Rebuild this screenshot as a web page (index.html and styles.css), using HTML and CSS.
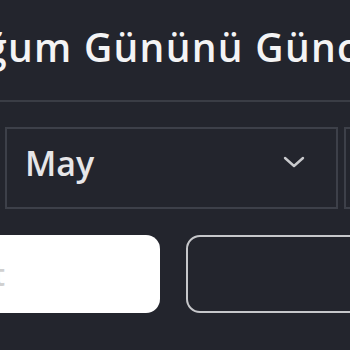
FILE: index.html
```html
<!DOCTYPE html>
<html lang="tr">
<head>
<meta charset="utf-8">
<link rel="stylesheet" href="styles.css">
</head>
<body>
<div class="dialog">
  <h2 class="title">Doğum Gününü Güncelle</h2>
  <div class="divider"></div>
  <div class="selects">
    <div class="select day"><span class="value">14</span></div>
    <div class="select month">
      <span class="value">May</span>
      <svg class="chev" width="22" height="12" viewBox="0 0 22 12"><path d="M2 2 L11 10 L20 2" fill="none" stroke="#c9cacd" stroke-width="2.4" stroke-linecap="round" stroke-linejoin="round"/></svg>
    </div>
    <div class="select year"><span class="value">1990</span></div>
  </div>
  <div class="actions">
    <button class="btn primary">Kaydet</button>
    <button class="btn secondary">İptal</button>
  </div>
</div>
</body>
</html>
```
FILE: styles.css
```css
html, body {
  margin: 0;
  padding: 0;
  background: #23252d;
  overflow: hidden;
  width: 350px;
  height: 350px;
}
.dialog {
  margin-left: -177px;
  width: 900px;
  font-family: "Open Sans", "Noto Sans", sans-serif;
  color: #f2f2f3;
}
.title {
  margin: 0 0 0 107px;
  padding-top: 23px;
  font-size: 39px;
  letter-spacing: 1.3px;
  font-weight: 600;
  line-height: 48px;
  height: 77px;
  color: #f4f4f5;
  white-space: nowrap;
}
.divider {
  height: 2px;
  background: #3a3d45;
}
.selects {
  display: grid;
  grid-template-columns: 176px 333px 200px;
  gap: 6px;
  margin-top: 25px;
}
.select {
  height: 78px;
  border: 2px solid #3d4049;
  display: flex;
  align-items: center;
  padding: 0 18px;
  justify-content: space-between;
}
.select .value {
  font-size: 34px;
  font-weight: 600;
  color: #e6e6e8;
  line-height: 1;
  margin-top: -10px;
}
.chev {
  margin-right: 13px;
  margin-top: -12px;
}
.actions {
  display: grid;
  grid-template-columns: 300px 300px;
  gap: 26px;
  margin-top: 26px;
  margin-left: 37px;
}
.btn {
  height: 78px;
  border-radius: 14px;
  font-family: inherit;
  font-size: 30px;
  font-weight: 600;
  padding: 0;
}
.primary {
  background: #ffffff;
  border: none;
  color: #d0d0d0;
  text-align: right;
  padding-right: 155px;
}
.secondary {
  background: transparent;
  border: 2px solid #c6c7ca;
  color: transparent;
}
```
